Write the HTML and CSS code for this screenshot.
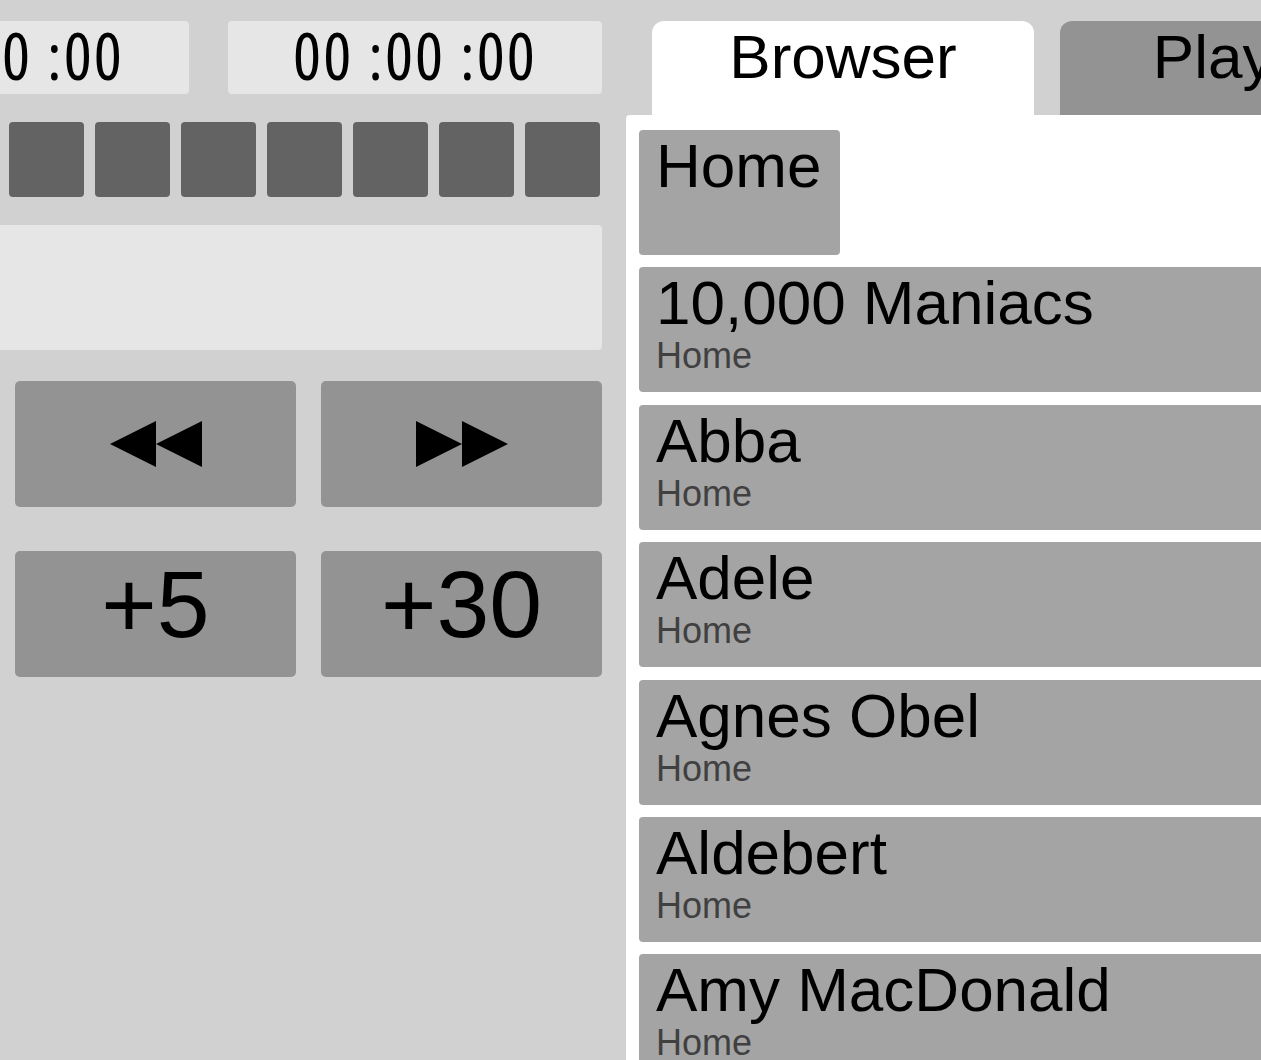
FILE: index.html
```html
<!DOCTYPE html>
<html lang="en">

<head>
    <meta charset="UTF-8">
    <meta name="viewport" content="width=device-width, initial-scale=1.0">
    <title>Player</title>
    <link rel="stylesheet" href="styles.css">
</head>

<body>

    <div class="app">
        <section class="controls">
            <div class="clocks">
                <div class="clock">00<span class="sep">:</span>00<span class="sep">:</span>00</div>
                <div class="clock">00<span class="sep">:</span>00<span class="sep">:</span>00</div>
            </div>

            <div class="slots">
                <div class="slot"></div>
                <div class="slot"></div>
                <div class="slot"></div>
                <div class="slot"></div>
                <div class="slot"></div>
                <div class="slot"></div>
                <div class="slot"></div>
                <div class="slot"></div>
            </div>

            <div class="display"></div>

            <div class="transport">
                <button class="btn btn-icon">
                    <svg width="92" height="46" viewBox="0 0 92 46">
                        <polygon points="0,23 46,0 46,46" />
                        <polygon points="46,23 92,0 92,46" />
                    </svg>
                </button>
                <button class="btn btn-icon">
                    <svg width="92" height="46" viewBox="0 0 92 46">
                        <polygon points="0,0 46,23 0,46" />
                        <polygon points="46,0 92,23 46,46" />
                    </svg>
                </button>
                <button class="btn">+5</button>
                <button class="btn">+30</button>
            </div>
        </section>

        <section class="library">
            <div class="tabs">
                <div class="tab active">Browser</div>
                <div class="tab">Playlist</div>
            </div>
            <div class="panel">
                <div class="crumb">Home</div>
                <div class="entry">
                    <div class="entry-title">10,000 Maniacs</div>
                    <div class="entry-path">Home</div>
                </div>
                <div class="entry">
                    <div class="entry-title">Abba</div>
                    <div class="entry-path">Home</div>
                </div>
                <div class="entry">
                    <div class="entry-title">Adele</div>
                    <div class="entry-path">Home</div>
                </div>
                <div class="entry">
                    <div class="entry-title">Agnes Obel</div>
                    <div class="entry-path">Home</div>
                </div>
                <div class="entry">
                    <div class="entry-title">Aldebert</div>
                    <div class="entry-path">Home</div>
                </div>
                <div class="entry">
                    <div class="entry-title">Amy MacDonald</div>
                    <div class="entry-path">Home</div>
                </div>
                <div class="entry">
                    <div class="entry-title">Angus &amp; Julia Stone</div>
                    <div class="entry-path">Home</div>
                </div>
            </div>
        </section>
    </div>

</body>

</html>
```
FILE: styles.css
```css
body {
    margin: 0;
    background-color: #d1d1d1;
    font-family: "Liberation Sans", Arial, sans-serif;
    overflow: hidden;
}

.app {
    display: flex;
    align-items: flex-start;
    padding-top: 21px;
}

/* left side: clocks, slots, transport */
.controls {
    flex: none;
    width: 587px;
    min-width: 0;
    margin-left: 15px;
    display: flex;
    flex-direction: column;
    align-items: flex-end;
}

.clocks {
    flex: none;
    display: flex;
    gap: 39px;
}

.clock {
    flex: none;
    width: 374px;
    height: 73px;
    box-sizing: border-box;
    padding-bottom: 8px;
    background-color: #e6e6e6;
    border-radius: 4px;
    display: flex;
    align-items: center;
    justify-content: center;
    font-family: "Open Sans", sans-serif;
    font-stretch: 75%;
    font-size: 66px;
    letter-spacing: 2px;
}

.clock .sep {
    padding-left: 15px;
}

.slots {
    flex: none;
    display: flex;
    gap: 11px;
    margin-top: 28px;
    margin-right: 2px;
}

.slot {
    flex: none;
    width: 75px;
    height: 75px;
    background-color: #636363;
    border-radius: 4px;
}

.display {
    flex: none;
    width: 787px;
    height: 125px;
    margin-top: 28px;
    background-color: #e6e6e6;
    border-radius: 4px;
}

.transport {
    align-self: stretch;
    display: grid;
    grid-template-columns: 1fr 1fr;
    column-gap: 25px;
    row-gap: 44px;
    margin-top: 31px;
}

.btn {
    height: 126px;
    border: none;
    border-radius: 5px;
    background-color: #939393;
    color: #000;
    font-family: inherit;
    font-size: 95px;
    padding: 0 0 20px;
    display: flex;
    align-items: center;
    justify-content: center;
}

.btn-icon {
    padding: 0;
}

/* right side: tabs and browser list */
.library {
    flex: none;
    width: 900px;
    margin-left: 24px;
}

.tabs {
    display: flex;
    gap: 26px;
    padding-left: 26px;
}

.tab {
    flex: none;
    width: 382px;
    height: 94px;
    border-radius: 12px 12px 0 0;
    background-color: #939393;
    text-align: center;
    font-size: 62px;
}

.tab.active {
    background-color: #fff;
}

.panel {
    background-color: #fff;
    border-radius: 4px 0 0 0;
    padding: 15px 13px;
    height: 1000px;
    display: flex;
    flex-direction: column;
    align-items: flex-start;
    gap: 12.4px;
}

.crumb,
.entry {
    flex: none;
    height: 125px;
    box-sizing: border-box;
    padding-left: 17px;
    background-color: #a4a4a4;
    border-radius: 4px;
    font-size: 62px;
}

.crumb {
    width: 201px;
}

.entry {
    align-self: stretch;
}

.entry-path {
    font-size: 36px;
    line-height: 1;
    color: #404040;
}
```
